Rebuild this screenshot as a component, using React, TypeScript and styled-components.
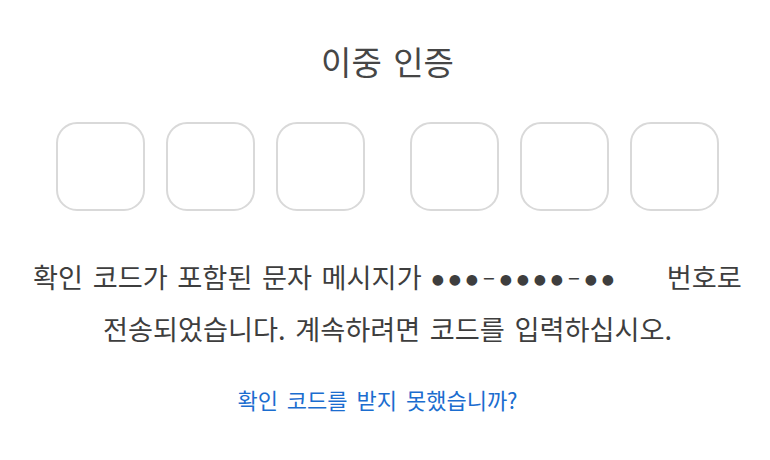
import React from "react";
import styled, { createGlobalStyle } from "styled-components";

const GlobalStyle = createGlobalStyle`
  html, body {
    margin: 0;
    padding: 0;
    background: #ffffff;
  }
  body {
    font-family: "Noto Sans CJK KR", "Noto Sans", sans-serif;
  }
`;

const Page = styled.main`
  display: flex;
  flex-direction: column;
  align-items: center;
  width: 770px;
  padding: 39px 0 0 5px;
  box-sizing: border-box;
`;

const Title = styled.h1`
  margin: 0;
  font-size: 33px;
  line-height: 44px;
  font-weight: 400;
  color: #464646;
  word-spacing: 4px;
`;

const CodeRow = styled.div`
  display: flex;
  gap: 45px;
  margin-top: 39px;
`;

const CodeGroup = styled.div`
  display: flex;
  gap: 21px;
`;

const CodeBox = styled.input`
  width: 89px;
  height: 89px;
  box-sizing: border-box;
  border: 2px solid #d9d9d9;
  border-radius: 21px;
  background: #fff;
  outline: none;
  padding: 0;
  font-size: 28px;
  text-align: center;
`;

const Message = styled.p`
  margin: 39px 0 0;
  font-size: 27.2px;
  line-height: 52px;
  color: #3e3e3e;
  text-align: center;
  word-spacing: 3.5px;
  white-space: nowrap;
`;

const Mask = styled.span`
  display: inline-flex;
  align-items: center;
  vertical-align: middle;
  margin: -4px 0 0 -2px;
`;

const MaskChar = styled.span<{ $dash?: boolean }>`
  display: inline-block;
  width: 17px;
  text-align: center;
  font-family: "DejaVu Sans", sans-serif;
  font-size: ${(p) => (p.$dash ? "16px" : "14px")};
  line-height: 20px;
  color: #3e3e3e;
`;

const Spacer = styled.span`
  display: inline-block;
  width: 41px;
`;

const HelpLink = styled.a`
  margin: 30px 20px 0 0;
  font-size: 22px;
  line-height: 30px;
  color: #1b6dcf;
  text-decoration: none;
  word-spacing: 4px;
  cursor: pointer;
`;

const mask = "●●●-●●●●-●●".split("");

export default function App() {
  return (
    <>
      <GlobalStyle />
      <Page>
        <Title>이중 인증</Title>
        <CodeRow>
          <CodeGroup>
            {[0, 1, 2].map((i) => (
              <CodeBox key={i} maxLength={1} aria-label={`코드 ${i + 1}`} />
            ))}
          </CodeGroup>
          <CodeGroup>
            {[3, 4, 5].map((i) => (
              <CodeBox key={i} maxLength={1} aria-label={`코드 ${i + 1}`} />
            ))}
          </CodeGroup>
        </CodeRow>
        <Message>
          확인 코드가 포함된 문자 메시지가{" "}
          <Mask>
            {mask.map((c, i) => (
              <MaskChar key={i} $dash={c === "-"}>
                {c === "-" ? "−" : c}
              </MaskChar>
            ))}
          </Mask>
          <Spacer /> 번호로
          <br />
          전송되었습니다. 계속하려면 코드를 입력하십시오.
        </Message>
        <HelpLink href="#">확인 코드를 받지 못했습니까?</HelpLink>
      </Page>
    </>
  );
}
